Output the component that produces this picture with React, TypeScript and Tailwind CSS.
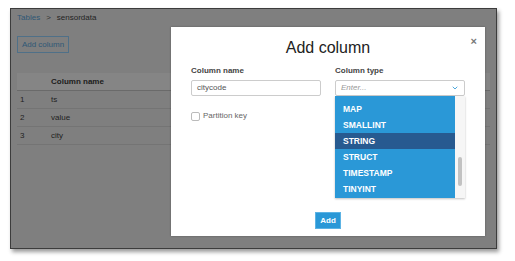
import React from 'react';
import { ChevronDown } from 'lucide-react';

const rows = ['ts', 'value', 'city'];
const types = ['MAP', 'SMALLINT', 'STRING', 'STRUCT', 'TIMESTAMP', 'TINYINT'];

export default function App() {
  return (
    <div className="w-[515px] h-[261px] bg-white pl-[10px] pt-[8px] font-['Liberation_Sans',Arial,sans-serif]">
      <div className="relative w-[487px] h-[241px] border border-[#3c3c3c] bg-[#7f7f7f] shadow-[2px_3px_4px_rgba(0,0,0,0.4)] overflow-hidden">
        {/* dimmed page behind the dialog */}
        <div className="px-[6px] pt-[4px]">
          <div className="flex items-center gap-[6px] text-[8px] h-[10px]">
            <span className="text-[#2f5876]">Tables</span>
            <span className="text-[#333]">&gt;</span>
            <span className="text-[#1f1f1f]">sensordata</span>
          </div>
          <div className="mt-[13px] w-[52px] h-[17px] border border-[#4f7088] flex items-center justify-center text-[8px] text-[#2f5876]">
            Add column
          </div>
          <div className="mt-[20px]">
            <div className="h-[18px] bg-[#858585] border-b border-[#6a6a6a] flex items-center text-[8px] font-bold text-[#1c1c1c]">
              <span className="w-[34px]" />
              <span>Column name</span>
            </div>
            {rows.map((r, i) => (
              <div key={r} className="h-[18px] border-b border-[#747474] flex items-center text-[8px] text-[#222]">
                <span className="w-[34px] pl-[3px]">{i + 1}</span>
                <span>{r}</span>
              </div>
            ))}
          </div>
        </div>

        {/* dialog */}
        <div className="absolute left-[160px] top-[18px] w-[314px] h-[209px] bg-white shadow-[0_0_2px_rgba(0,0,0,0.3)]">
          <div className="absolute right-[8px] top-[6px] text-[11px] font-bold text-[#777]">×</div>
          <h2 className="text-center text-[16px] text-[#222] mt-[12px] leading-[18px]">Add column</h2>
          <div className="flex gap-[14px] px-[20px] mt-[8px]">
            <div className="w-[130px]">
              <div className="text-[8px] font-bold text-[#444] mb-[3px]">Column name</div>
              <div className="h-[16px] border border-[#ccc] rounded-[2px] flex items-center px-[5px] text-[8px] text-[#555]">
                citycode
              </div>
              <label className="flex items-center gap-[3px] mt-[14px] text-[8px] text-[#666]">
                <span className="w-[9px] h-[9px] border border-[#bbb] rounded-[2px] bg-white" />
                Partition key
              </label>
            </div>
            <div className="w-[130px]">
              <div className="text-[8px] font-bold text-[#444] mb-[3px]">Column type</div>
              <div className="h-[16px] border border-[#ccc] rounded-[2px] flex items-center justify-between px-[5px]">
                <span className="text-[8px] italic text-[#999]">Enter...</span>
                <ChevronDown className="w-[8px] h-[8px] text-[#2a97d6]" strokeWidth={2.5} />
              </div>
              <div className="flex h-[102px] shadow-[0_1px_2px_rgba(0,0,0,0.25)]">
                <div className="w-[120px] bg-[#2a98d7] pt-[5px]">
                  {types.map((t) => (
                    <div
                      key={t}
                      className={`h-[16px] flex items-center px-[8px] text-[8.5px] font-bold text-white ${t === 'STRING' ? 'bg-[#275a90]' : ''}`}
                    >
                      {t}
                    </div>
                  ))}
                </div>
                <div className="flex-1 bg-[#f6f6f6] flex justify-center pt-[61px]">
                  <div className="w-[4px] h-[29px] rounded-full bg-[#c2c2c2]" />
                </div>
              </div>
            </div>
          </div>
          <div className="flex justify-center mt-[14px]">
            <button className="w-[26px] h-[17px] bg-[#2a98d7] text-white text-[8px] font-bold border border-[#5db3e4]">
              Add
            </button>
          </div>
        </div>
      </div>
    </div>
  );
}
